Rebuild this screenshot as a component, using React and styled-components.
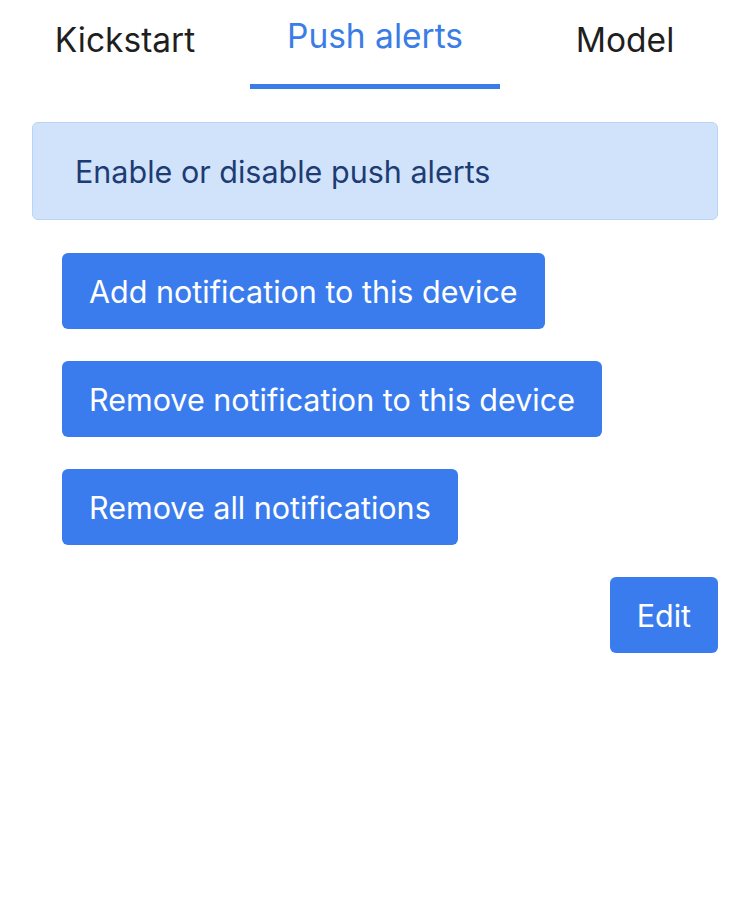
import React, { useState } from 'react';
import styled, { createGlobalStyle } from 'styled-components';

const GlobalStyle = createGlobalStyle`
  html, body {
    margin: 0;
    padding: 0;
    background: #ffffff;
    font-family: Inter, "Noto Sans", "Liberation Sans", sans-serif;
  }
  * {
    box-sizing: border-box;
  }
`;

const Page = styled.div`
  width: 750px;
  min-height: 900px;
  background: #ffffff;
`;

const Tabs = styled.nav`
  display: grid;
  grid-template-columns: repeat(3, 1fr);
  height: 89px;
`;

const Tab = styled.button`
  border: none;
  background: none;
  padding: 0;
  padding-bottom: ${props => (props.active ? '12px' : '5px')};
  font-family: inherit;
  font-size: 33.5px;
  color: ${props => (props.active ? '#3b7de6' : '#1f1f1f')};
  cursor: pointer;
  border-bottom: 5px solid ${props => (props.active ? '#3b7de6' : 'transparent')};
  display: flex;
  align-items: center;
  justify-content: center;
`;

const Content = styled.main`
  padding: 33px 32px 0;
  display: flex;
  flex-direction: column;
`;

const Alert = styled.div`
  background: #d1e3fb;
  border: 1px solid #bad4f6;
  border-radius: 6px;
  height: 98px;
  padding: 0 42px;
  display: flex;
  align-items: center;
  color: #1d3c73;
  font-size: 30.5px;
`;

const Actions = styled.div`
  display: flex;
  flex-direction: column;
  align-items: flex-start;
  gap: 32px;
  padding: 33px 0 0 30px;
`;

const Button = styled.button`
  height: 76px;
  padding: 0 27px;
  border: none;
  border-radius: 6px;
  background: #3a7ced;
  color: #ffffff;
  font-family: inherit;
  font-size: 30.5px;
  cursor: pointer;
  align-self: ${props => (props.right ? 'flex-end' : 'flex-start')};
`;

const tabs = ['Kickstart', 'Push alerts', 'Model'];

const App = () => {
  const [active, setActive] = useState('Push alerts');

  return (
    <Page>
      <GlobalStyle />
      <Tabs>
        {tabs.map(name => (
          <Tab key={name} active={name === active} onClick={() => setActive(name)}>
            {name}
          </Tab>
        ))}
      </Tabs>
      <Content>
        <Alert>Enable or disable push alerts</Alert>
        <Actions>
          <Button>Add notification to this device</Button>
          <Button>Remove notification to this device</Button>
          <Button>Remove all notifications</Button>
          <Button right>Edit</Button>
        </Actions>
      </Content>
    </Page>
  );
};

export default App;
